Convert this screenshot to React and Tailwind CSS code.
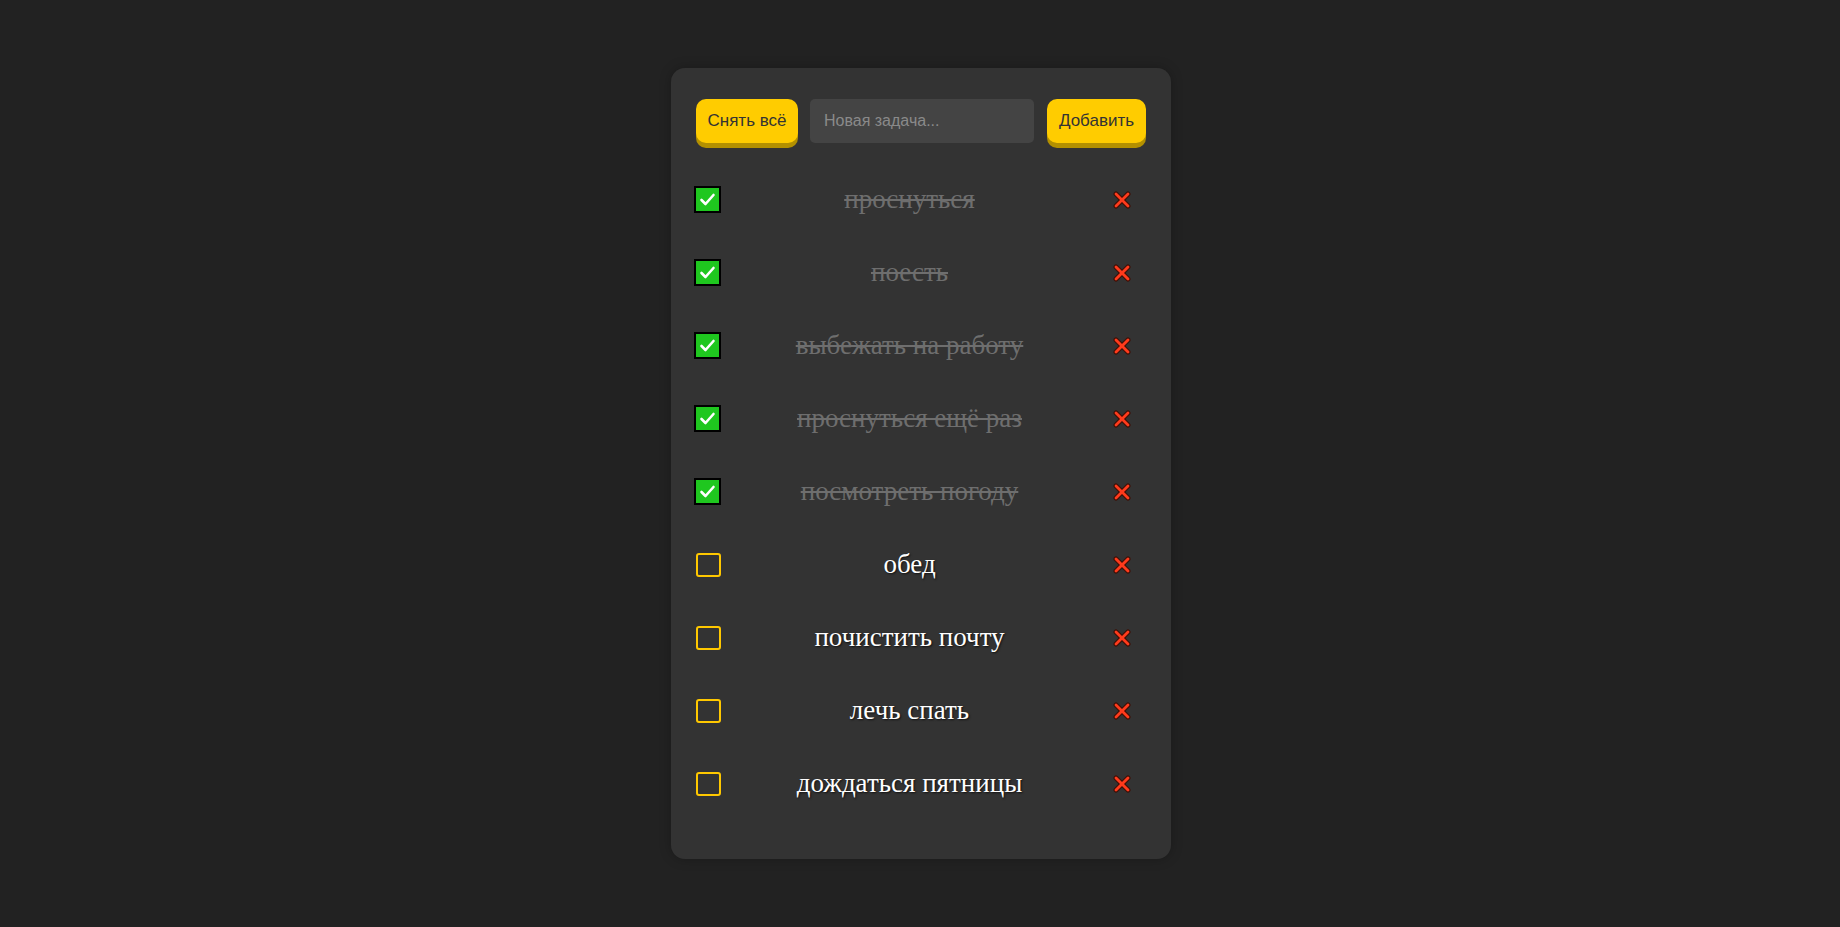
import React from "react";

const tasks = [
  { text: "проснуться", done: true },
  { text: "поесть", done: true },
  { text: "выбежать на работу", done: true },
  { text: "проснуться ещё раз", done: true },
  { text: "посмотреть погоду", done: true },
  { text: "обед", done: false },
  { text: "почистить почту", done: false },
  { text: "лечь спать", done: false },
  { text: "дождаться пятницы", done: false },
];

function XIcon() {
  return (
    <svg width="18" height="18" viewBox="0 0 18 18">
      <g strokeLinecap="round">
        <line x1="3" y1="3" x2="15" y2="15" stroke="#3e0f06" strokeWidth="5" />
        <line x1="15" y1="3" x2="3" y2="15" stroke="#3e0f06" strokeWidth="5" />
        <line x1="3" y1="3" x2="15" y2="15" stroke="#ff3b1c" strokeWidth="2.8" />
        <line x1="15" y1="3" x2="3" y2="15" stroke="#ff3b1c" strokeWidth="2.8" />
      </g>
    </svg>
  );
}

function Box({ done }) {
  if (done) {
    return (
      <div className="w-[27px] h-[27px] bg-[#1fc71f] border-2 border-black flex items-center justify-center">
        <svg width="19" height="19" viewBox="0 0 19 19">
          <polyline points="3.5,10 7.5,14 15.5,5" fill="none" stroke="#fff" strokeWidth="2.6" strokeLinecap="round" strokeLinejoin="round" />
        </svg>
      </div>
    );
  }
  return <div className="w-[25px] h-[24px] border-2 border-[#ffc800] rounded-[3px]" />;
}

export default function App() {
  return (
    <div className="min-h-screen w-full bg-[#222222] flex items-center justify-center" style={{ fontFamily: '"Liberation Sans", Arial, sans-serif' }}>
      <div className="ml-[2px] w-[500px] bg-[#333333] rounded-[14px] pt-[31px] pb-[39px] shadow-[0_0_12px_rgba(0,0,0,0.25)]">
        <div className="flex items-start px-[25px] h-[44px]">
          <button className="w-[102px] h-[44px] bg-[#ffcc00] rounded-[10px] text-[17px] text-[#333333] shadow-[0_5px_0_#b39000] font-['Liberation_Sans',Arial,sans-serif]">
            Снять всё
          </button>
          <input
            placeholder="Новая задача..."
            className="ml-[12px] w-[224px] h-[44px] bg-[#444444] rounded-[5px] px-[14px] text-[16px] text-white placeholder:text-[#8a8a8a] outline-none font-['Liberation_Sans',Arial,sans-serif]"
          />
          <button className="ml-[13px] w-[99px] h-[44px] bg-[#ffcc00] rounded-[10px] text-[17px] text-[#333333] shadow-[0_5px_0_#b39000] font-['Liberation_Sans',Arial,sans-serif]">
            Добавить
          </button>
        </div>
        <div className="mt-[20px]">
          {tasks.map((t, i) => (
            <div key={i} className="h-[73px] flex items-center pl-[23px] pr-[25px]">
              <div className="w-[27px] flex justify-end">
                <Box done={t.done} />
              </div>
              <div
                className={
                  "flex-1 text-center text-[27px] font-['Liberation_Serif','Times_New_Roman',serif] " +
                  (t.done
                    ? "text-[#6e6e6e] line-through"
                    : "text-white [text-shadow:1px_1px_2px_rgba(0,0,0,0.7)]")
                }
              >
                {t.text}
              </div>
              <button className="w-[48px] h-[30px] flex items-center justify-center">
                <XIcon />
              </button>
            </div>
          ))}
        </div>
      </div>
    </div>
  );
}
